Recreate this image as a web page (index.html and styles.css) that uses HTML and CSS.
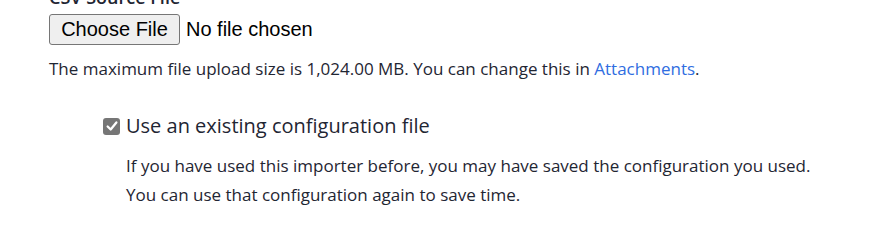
FILE: index.html
```html
<!DOCTYPE html>
<html>
<head>
<meta charset="utf-8">
<link rel="stylesheet" href="styles.css">
</head>
<body>
<div class="page">
  <div class="field">
    <label class="field-label">CSV Source File</label>
    <div class="file-input">
      <span class="file-button">Choose File</span>
      <span class="file-status">No file chosen</span>
    </div>
    <p class="help">The maximum file upload size is 1,024.00 MB. You can change this in <a href="#" class="link">Attachments</a>.</p>
  </div>
  <div class="option">
    <div class="option-row">
      <span class="check"><svg viewBox="0 0 16 16" width="14" height="14"><path d="M3 8.5 L6.5 12 L13 4" fill="none" stroke="#fff" stroke-width="2.6" stroke-linecap="round" stroke-linejoin="round"/></svg></span>
      <span class="option-label">Use an existing configuration file</span>
    </div>
    <div class="option-desc">
      <p>If you have used this importer before, you may have saved the configuration you used.</p>
      <p>You can use that configuration again to save time.</p>
    </div>
  </div>
</div>
</body>
</html>
```

FILE: styles.css
```css
html, body {
  margin: 0;
  padding: 0;
  background: #fff;
}
body {
  font-family: "Open Sans", "Noto Sans", sans-serif;
  color: #1f2633;
  overflow: hidden;
}
.page {
  padding-left: 49px;
  margin-top: -14px;
}
.field-label {
  display: block;
  font-weight: 600;
  font-size: 18px;
  line-height: 22px;
  height: 28px;
  color: #1f2633;
}
.file-input {
  display: flex;
  align-items: center;
  gap: 6px;
}
.file-button {
  box-sizing: border-box;
  height: 31px;
  width: 131px;
  display: inline-flex;
  align-items: center;
  justify-content: center;
  background: #efefef;
  border: 1px solid #767676;
  border-radius: 3px;
  font-family: "Liberation Sans", Arial, sans-serif;
  font-size: 20px;
  color: #000;
}
.file-status {
  font-family: "Liberation Sans", Arial, sans-serif;
  font-size: 20px;
  color: #000;
}
.help {
  margin: 12px 0 0;
  font-size: 17px;
  line-height: 24px;
}
.link {
  color: #2f6de1;
  text-decoration: none;
}
.option {
  margin-top: 31px;
  padding-left: 54px;
}
.option-row {
  display: flex;
  align-items: center;
  gap: 6px;
}
.check {
  width: 17px;
  height: 17px;
  border-radius: 3px;
  background: #767676;
  display: inline-flex;
  align-items: center;
  justify-content: center;
}
.option-label {
  font-size: 20px;
  line-height: 28px;
}
.option-desc {
  padding-left: 23px;
  margin-top: 11px;
}
.option-desc p {
  margin: 0;
  font-size: 17px;
  line-height: 29px;
}
```
